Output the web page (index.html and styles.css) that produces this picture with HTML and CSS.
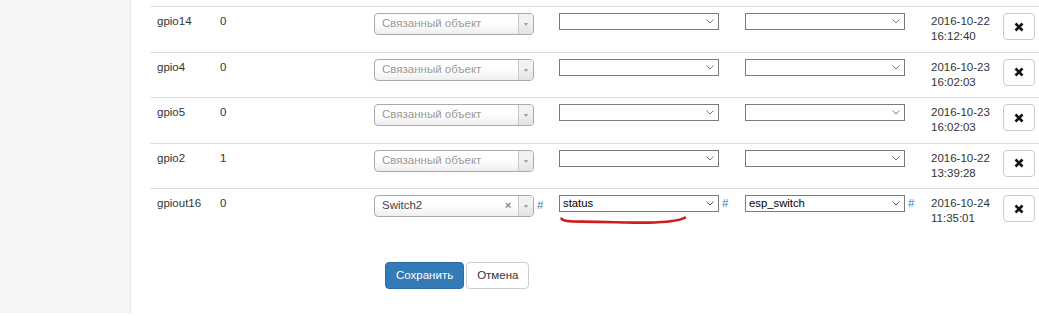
FILE: index.html
```html
<!DOCTYPE html>
<html lang="ru">
<head>
<meta charset="utf-8">
<title>GPIO</title>
<link rel="stylesheet" href="styles.css">
</head>
<body>
<div class="page">
  <aside class="sidebar"></aside>
  <main class="content">
    <div class="grid-table">
      <div class="row">
        <div class="cell">gpio14</div>
        <div class="cell">0</div>
        <div class="cell"><div class="s2"><span class="s2-text placeholder">Связанный объект</span><span class="s2-arrow"><b></b></span></div></div>
        <div class="cell"><div class="sel"><span class="sel-text">&nbsp;</span><svg class="chev" width="8" height="5" viewBox="0 0 8 5"><polyline points="0.5,0.5 4,4 7.5,0.5" fill="none" stroke="#777" stroke-width="1"/></svg></div></div>
        <div class="cell"><div class="sel"><span class="sel-text">&nbsp;</span><svg class="chev" width="8" height="5" viewBox="0 0 8 5"><polyline points="0.5,0.5 4,4 7.5,0.5" fill="none" stroke="#777" stroke-width="1"/></svg></div></div>
        <div class="cell date">2016-10-22<br>16:12:40</div>
        <div class="cell"><button class="btn-del"><svg width="10" height="10" viewBox="0 0 10 10"><path d="M1.5 1.5 L8.5 8.5 M8.5 1.5 L1.5 8.5" stroke="#111" stroke-width="2.6"/></svg></button></div>
      </div>
      <div class="row">
        <div class="cell">gpio4</div>
        <div class="cell">0</div>
        <div class="cell"><div class="s2"><span class="s2-text placeholder">Связанный объект</span><span class="s2-arrow"><b></b></span></div></div>
        <div class="cell"><div class="sel"><span class="sel-text">&nbsp;</span><svg class="chev" width="8" height="5" viewBox="0 0 8 5"><polyline points="0.5,0.5 4,4 7.5,0.5" fill="none" stroke="#777" stroke-width="1"/></svg></div></div>
        <div class="cell"><div class="sel"><span class="sel-text">&nbsp;</span><svg class="chev" width="8" height="5" viewBox="0 0 8 5"><polyline points="0.5,0.5 4,4 7.5,0.5" fill="none" stroke="#777" stroke-width="1"/></svg></div></div>
        <div class="cell date">2016-10-23<br>16:02:03</div>
        <div class="cell"><button class="btn-del"><svg width="10" height="10" viewBox="0 0 10 10"><path d="M1.5 1.5 L8.5 8.5 M8.5 1.5 L1.5 8.5" stroke="#111" stroke-width="2.6"/></svg></button></div>
      </div>
      <div class="row">
        <div class="cell">gpio5</div>
        <div class="cell">0</div>
        <div class="cell"><div class="s2"><span class="s2-text placeholder">Связанный объект</span><span class="s2-arrow"><b></b></span></div></div>
        <div class="cell"><div class="sel"><span class="sel-text">&nbsp;</span><svg class="chev" width="8" height="5" viewBox="0 0 8 5"><polyline points="0.5,0.5 4,4 7.5,0.5" fill="none" stroke="#777" stroke-width="1"/></svg></div></div>
        <div class="cell"><div class="sel"><span class="sel-text">&nbsp;</span><svg class="chev" width="8" height="5" viewBox="0 0 8 5"><polyline points="0.5,0.5 4,4 7.5,0.5" fill="none" stroke="#777" stroke-width="1"/></svg></div></div>
        <div class="cell date">2016-10-23<br>16:02:03</div>
        <div class="cell"><button class="btn-del"><svg width="10" height="10" viewBox="0 0 10 10"><path d="M1.5 1.5 L8.5 8.5 M8.5 1.5 L1.5 8.5" stroke="#111" stroke-width="2.6"/></svg></button></div>
      </div>
      <div class="row">
        <div class="cell">gpio2</div>
        <div class="cell">1</div>
        <div class="cell"><div class="s2"><span class="s2-text placeholder">Связанный объект</span><span class="s2-arrow"><b></b></span></div></div>
        <div class="cell"><div class="sel"><span class="sel-text">&nbsp;</span><svg class="chev" width="8" height="5" viewBox="0 0 8 5"><polyline points="0.5,0.5 4,4 7.5,0.5" fill="none" stroke="#777" stroke-width="1"/></svg></div></div>
        <div class="cell"><div class="sel"><span class="sel-text">&nbsp;</span><svg class="chev" width="8" height="5" viewBox="0 0 8 5"><polyline points="0.5,0.5 4,4 7.5,0.5" fill="none" stroke="#777" stroke-width="1"/></svg></div></div>
        <div class="cell date">2016-10-22<br>13:39:28</div>
        <div class="cell"><button class="btn-del"><svg width="10" height="10" viewBox="0 0 10 10"><path d="M1.5 1.5 L8.5 8.5 M8.5 1.5 L1.5 8.5" stroke="#111" stroke-width="2.6"/></svg></button></div>
      </div>
      <div class="row">
        <div class="cell">gpiout16</div>
        <div class="cell">0</div>
        <div class="cell"><div class="s2"><span class="s2-text">Switch2</span><span class="s2-clear">×</span><span class="s2-arrow"><b></b></span></div><a class="hash" href="#">#</a></div>
        <div class="cell"><div class="sel"><span class="sel-text">status</span><svg class="chev" width="8" height="5" viewBox="0 0 8 5"><polyline points="0.5,0.5 4,4 7.5,0.5" fill="none" stroke="#555" stroke-width="1"/></svg></div><a class="hash" href="#">#</a>
          <svg class="scribble" width="186" height="45" viewBox="0 0 186 45"><path d="M9.5 29.5 C10.5 32 16 32.6 30 32.6 C58 32.6 75 34 96 33.6 C116 33.2 127 32 133 28.6" fill="none" stroke="#d01c1c" stroke-width="2.6" stroke-linecap="round"/></svg>
        </div>
        <div class="cell"><div class="sel"><span class="sel-text">esp_switch</span><svg class="chev" width="8" height="5" viewBox="0 0 8 5"><polyline points="0.5,0.5 4,4 7.5,0.5" fill="none" stroke="#555" stroke-width="1"/></svg></div><a class="hash" href="#">#</a></div>
        <div class="cell date">2016-10-24<br>11:35:01</div>
        <div class="cell"><button class="btn-del"><svg width="10" height="10" viewBox="0 0 10 10"><path d="M1.5 1.5 L8.5 8.5 M8.5 1.5 L1.5 8.5" stroke="#111" stroke-width="2.6"/></svg></button></div>
      </div>
    </div>
    <div class="actions">
      <button class="btn btn-primary">Сохранить</button>
      <button class="btn btn-default">Отмена</button>
    </div>
  </main>
</div>
</body>
</html>
```
FILE: styles.css
```css
html, body {
  margin: 0;
  padding: 0;
  overflow: hidden;
  background: #fff;
}
body {
  font-family: "Liberation Sans", Arial, sans-serif;
  font-size: 11.5px;
  line-height: 16px;
  color: #333;
}
.page {
  display: flex;
  align-items: flex-start;
  width: 1039px;
  height: 316px;
}
.sidebar {
  flex: none;
  width: 130px;
  height: 313px;
  background: #f5f5f5;
  border-right: 1px solid #e6e6e6;
}
.content {
  flex: 1;
  min-width: 0;
  padding: 6px 0 0 19px;
  overflow: hidden;
}
.row {
  display: grid;
  grid-template-columns: 63px 154px 185px 186px 186px 72px 43px;
  height: 45.5px;
  box-sizing: border-box;
  border-top: 1px solid #dddddd;
}
.cell {
  position: relative;
  padding: 6px 0 0 7px;
  white-space: nowrap;
  display: flex;
  align-items: baseline;
  gap: 3px;
}
.cell.date {
  display: block;
  line-height: 15px;
  padding-top: 7px;
}
/* select2 style box */
.s2 {
  flex: none;
  display: flex;
  align-items: baseline;
  width: 160px;
  height: 22px;
  box-sizing: border-box;
  border: 1px solid #aaa;
  border-radius: 4px;
  background: linear-gradient(to top, #eeeeee 0%, #ffffff 55%);
  overflow: hidden;
}
.s2-text {
  flex: 1;
  padding-left: 7px;
  line-height: 19px;
  color: #444;
}
.s2-text.placeholder {
  color: #999;
}
.s2-clear {
  flex: none;
  width: 13px;
  color: #888;
  font-size: 11px;
  font-weight: bold;
  line-height: 19px;
}
.s2-arrow {
  flex: none;
  align-self: stretch;
  width: 14px;
  border-left: 1px solid #c8c8c8;
  background: linear-gradient(to top, #e2e2e2 0%, #f2f2f2 60%);
  display: flex;
  align-items: center;
  justify-content: center;
}
.s2-arrow b {
  display: block;
  width: 0;
  height: 0;
  border-left: 2.5px solid transparent;
  border-right: 2.5px solid transparent;
  border-top: 3px solid #999;
  margin-top: 1px;
}
/* native-looking select */
.sel {
  flex: none;
  position: relative;
  display: flex;
  align-items: baseline;
  width: 160px;
  height: 17px;
  box-sizing: border-box;
  border: 1px solid #7a7a7a;
  background: #fff;
}
.sel-text {
  padding-left: 3px;
  font-size: 11.3px;
  line-height: 15px;
  color: #000;
}
.chev {
  position: absolute;
  right: 4px;
  top: 5px;
}
.hash {
  color: #337ab7;
  text-decoration: none;
}
.scribble {
  position: absolute;
  left: 0;
  top: 0;
  overflow: visible;
  pointer-events: none;
}
.btn-del {
  flex: none;
  width: 32px;
  height: 27px;
  padding: 0;
  margin: 0;
  border: 1px solid #cccccc;
  border-radius: 4px;
  background: #fff;
  display: flex;
  align-items: center;
  justify-content: center;
}
.btn-del svg {
  display: block;
}
.actions {
  display: flex;
  gap: 2px;
  margin: 28px 0 0 235px;
}
.btn {
  height: 27px;
  padding: 0 10px;
  margin: 0;
  border-radius: 4px;
  font-family: "Liberation Sans", Arial, sans-serif;
  font-size: 11.5px;
  line-height: 25px;
}
.btn-primary {
  background: #337ab7;
  border: 1px solid #2e6da4;
  color: #fff;
}
.btn-default {
  background: #fff;
  border: 1px solid #cccccc;
  color: #333;
}
```
